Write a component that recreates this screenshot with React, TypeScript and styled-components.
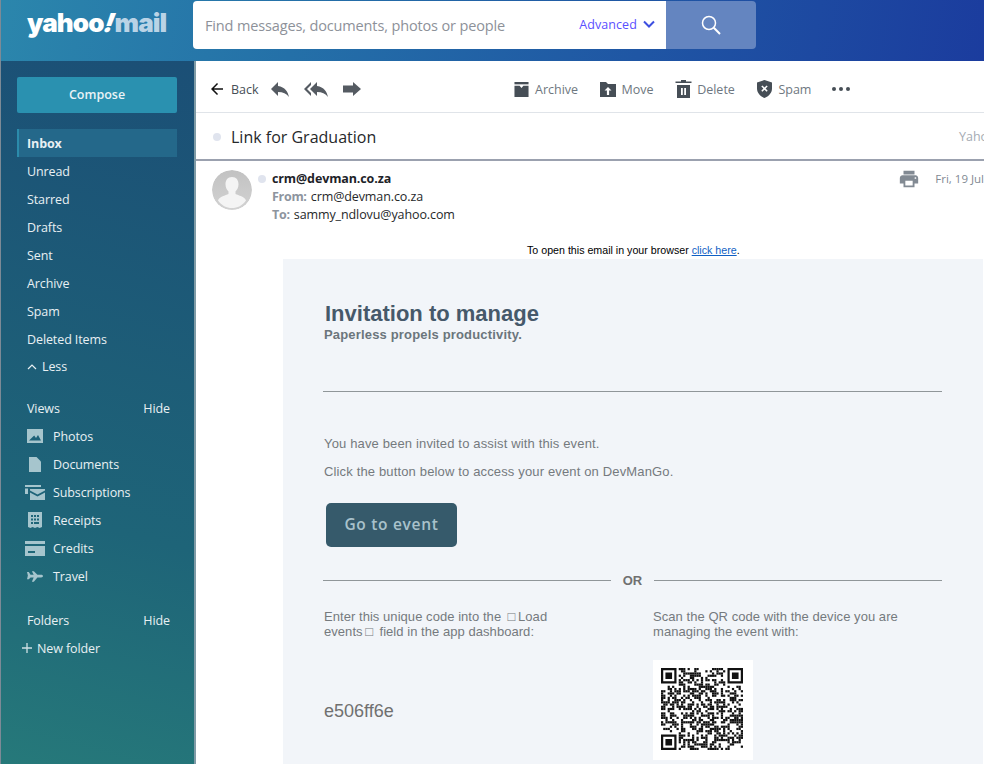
import React from "react";
import styled, { createGlobalStyle } from "styled-components";
import { MdArrowBack, MdPrint, MdReply, MdReplyAll } from "react-icons/md";

const GlobalStyle = createGlobalStyle`
  html, body {
    margin: 0;
    padding: 0;
    height: 100%;
    overflow: hidden;
    background: #fff;
  }
  * {
    box-sizing: border-box;
  }
`;

const uiFont = `"Open Sans", "Noto Sans", sans-serif`;
const mailFont = `"Liberation Sans", Arial, sans-serif`;

/**
 * page frame
 */
const Page = styled.div`
  width: 984px;
  height: 764px;
  overflow: hidden;
  display: flex;
  flex-direction: column;
  font-family: ${uiFont};
  border-left: 1px solid #7d8a96;
`;

const Header = styled.header`
  height: 61px;
  flex: none;
  display: flex;
  align-items: flex-start;
  background: linear-gradient(100deg, #2b86ac 0%, #2470a8 30%, #1f56a4 65%, #1b3c9e 100%);
`;

const LogoBox = styled.div`
  width: 192px;
  height: 50px;
  padding: 7px 0 0 26px;
  display: flex;
  align-items: baseline;
  font-family: Inter, Lato, "Liberation Sans", sans-serif;
  font-size: 26px;
  font-weight: 900;
  letter-spacing: -0.9px;
  color: #fff;
`;

const LogoBang = styled.span`
  display: inline-block;
  transform: skewX(-20deg);
  margin-left: 1px;
`;

const LogoMail = styled.span`
  color: #b9d3e6;
  margin-left: 1px;
`;

const SearchBox = styled.div`
  width: 473px;
  height: 48px;
  margin-top: 1px;
  padding: 0 11px 0 12px;
  display: flex;
  align-items: center;
  justify-content: space-between;
  background: #fff;
  border-radius: 4px 0 0 4px;
`;

const SearchHint = styled.span`
  font-size: 14.5px;
  letter-spacing: -0.14px;
  color: #8d9199;
`;

const Advanced = styled.span`
  display: flex;
  align-items: center;
  gap: 6px;
  padding-bottom: 2px;
  font-size: 12.5px;
  letter-spacing: 0.1px;
  color: #5a4fff;
`;

const SearchButton = styled.div`
  width: 90px;
  height: 48px;
  margin-top: 1px;
  display: flex;
  align-items: center;
  justify-content: center;
  background: #6485c0;
  border-radius: 0 4px 4px 0;
`;

const Body = styled.div`
  flex: 1;
  min-height: 0;
  display: flex;
`;

/**
 * left rail
 */
const Sidebar = styled.aside`
  width: 195px;
  flex: none;
  padding: 16px 17px 0 16px;
  background: linear-gradient(195deg, #1b4f76 0%, #1e6478 65%, #26797a 100%);
  border-right: 2px solid #7f9ba6;
  color: #e8f0f3;
`;

const Compose = styled.div`
  height: 36px;
  margin-bottom: 16px;
  padding-bottom: 2px;
  display: flex;
  align-items: center;
  justify-content: center;
  background: #2a91b0;
  border-radius: 2px;
  font-size: 12.5px;
  font-weight: 600;
  color: #e8f3f6;
`;

const NavRow = styled.div<{ $active?: boolean }>`
  height: 28px;
  display: flex;
  align-items: center;
  padding-left: ${(p) => (p.$active ? "8px" : "10px")};
  border-left: ${(p) => (p.$active ? "2px solid #2b8bab" : "0")};
  background: ${(p) => (p.$active ? "#24688a" : "transparent")};
  font-size: 12.5px;
  font-weight: ${(p) => (p.$active ? 700 : 400)};
  letter-spacing: -0.1px;
  white-space: nowrap;
`;

const LessRow = styled(NavRow)`
  height: 27px;
  gap: 5px;
`;

const SectionRow = styled(NavRow)<{ $gap: number }>`
  margin-top: ${(p) => p.$gap}px;
  justify-content: space-between;
  padding-right: 7px;
`;

const ViewRow = styled(NavRow)`
  padding-left: 8px;
`;

const ViewIcon = styled.span`
  width: 20px;
  margin-right: 8px;
  display: flex;
  justify-content: center;
  color: #a6c5cd;
`;

const NewFolderRow = styled(NavRow)`
  padding-left: 5px;
  gap: 5px;
`;

/**
 * message pane
 */
const Pane = styled.main`
  flex: 1;
  min-width: 0;
  overflow: hidden;
  display: flex;
  flex-direction: column;
  background: #fff;
`;

const Toolbar = styled.div`
  height: 52px;
  flex: none;
  display: flex;
  align-items: center;
  padding: 5px 0 0 12px;
  border-bottom: 1px solid #e0e4e9;
`;

const BackLink = styled.span`
  display: flex;
  align-items: center;
  gap: 5px;
  width: 60px;
  font-size: 12.5px;
  color: #464e56;
`;

const ReplyIcons = styled.div`
  width: 245px;
  display: flex;
  align-items: center;
  gap: 12px;
  color: #555b62;
`;

const ForwardSlot = styled.span`
  display: flex;
  margin-left: 3px;
`;

const ToolAction = styled.span`
  display: flex;
  align-items: center;
  gap: 5px;
  margin-right: 21.5px;
  font-size: 12.5px;
  color: #6e7780;
`;

const MoreDots = styled.span`
  display: flex;
  gap: 2.5px;
  margin-left: -1px;
`;

const Dot = styled.i`
  width: 4.5px;
  height: 4.5px;
  border-radius: 50%;
  background: #464e56;
`;

const SubjectBar = styled.div`
  height: 48px;
  flex: none;
  display: flex;
  align-items: center;
  padding: 1px 0 0 17px;
  border-bottom: 2px solid #9ba1af;
`;

const UnreadDot = styled.span`
  width: 8px;
  height: 8px;
  flex: none;
  border-radius: 50%;
  background: #e0e4ee;
`;

const Subject = styled.h1`
  margin: 0 0 0 10px;
  width: 728px;
  flex: none;
  font-size: 16px;
  font-weight: 400;
  color: #26282a;
`;

const SourceTag = styled.span`
  font-size: 12.5px;
  color: #a5abb3;
  white-space: nowrap;
`;

const MessageHead = styled.div`
  height: 81px;
  flex: none;
  display: flex;
  padding: 9px 0 0 16px;
`;

const Avatar = styled.div`
  width: 40px;
  height: 40px;
  flex: none;
  border-radius: 50%;
  overflow: hidden;
`;

const SenderDot = styled(UnreadDot)`
  margin: 5px 0 0 6px;
`;

const Sender = styled.div`
  width: 628px;
  margin-left: 6px;
`;

const SenderName = styled.div`
  height: 18px;
  line-height: 18px;
  font-size: 12.5px;
  font-weight: 700;
  letter-spacing: -0.12px;
  color: #1d2228;
`;

const AddressLine = styled.div`
  height: 18px;
  line-height: 18px;
  font-size: 12.5px;
  letter-spacing: -0.1px;
  color: #26282a;
`;

const AddressLabel = styled.b`
  font-weight: 700;
  margin-right: 1px;
  color: #8d949e;
  letter-spacing: -0.3px;
`;

const PrintSlot = styled.div`
  width: 38px;
  margin-top: -2px;
  padding-left: 1px;
  color: #828a93;
`;

const DateText = styled.span`
  font-size: 11.5px;
  line-height: 18px;
  color: #828a93;
  white-space: nowrap;
`;

/**
 * email content
 */
const OpenBrowser = styled.div`
  height: 17px;
  padding-left: 331px;
  padding-top: 1px;
  font-family: ${mailFont};
  font-size: 10.67px;
  line-height: 15px;
  color: #000;
  white-space: nowrap;
`;

const BrowserLink = styled.a`
  color: #0f5fc4;
  text-decoration: underline;
`;

const MailSheet = styled.div`
  flex: 1;
  margin-left: 87px;
  padding: 0 0 0 41px;
  width: 700px;
  background: #f2f5f9;
  font-family: ${mailFont};
  color: #666;
`;

const Title = styled.h2`
  margin: 0 0 0 1px;
  padding-top: 42px;
  font-size: 22px;
  line-height: 25px;
  font-weight: 700;
  color: #46596a;
`;

const Tagline = styled.div`
  margin-top: 1px;
  font-size: 13px;
  line-height: 15px;
  font-weight: 700;
  letter-spacing: 0.17px;
  color: #6b757c;
`;

const Rule = styled.hr`
  flex: 1;
  margin: 0;
  border: 0;
  border-top: 1px solid #909699;
`;

const TitleRule = styled.div`
  display: flex;
  width: 619px;
  margin: 49px 0 44px -1px;
`;

const Para = styled.p`
  margin: 0 0 13px;
  font-size: 13px;
  line-height: 15px;
  letter-spacing: 0.15px;
  color: #757a7e;
`;

const EventButton = styled.div`
  width: 131px;
  height: 44px;
  margin: 24px 0 0 2px;
  padding-bottom: 3px;
  display: flex;
  align-items: center;
  justify-content: center;
  border-radius: 5px;
  background: #365a6b;
  font-family: ${uiFont};
  font-size: 15.5px;
  font-weight: 600;
  letter-spacing: 0.7px;
  color: #a9c2cb;
`;

const OrRow = styled.div`
  width: 619px;
  height: 16px;
  margin: 25px 0 0 -1px;
  display: flex;
  align-items: center;
  gap: 12px;
  font-size: 13px;
  font-weight: 700;
  color: #707070;
`;

const Columns = styled.div`
  margin-top: 21px;
  display: grid;
  grid-template-columns: 329px 300px;
`;

const ColumnText = styled.div`
  width: 260px;
  font-size: 13px;
  line-height: 15px;
  letter-spacing: 0.05px;
  color: #757a7e;
`;

const CodeText = styled.div`
  margin-top: 61px;
  font-size: 18px;
  line-height: 22px;
  color: #707070;
`;

const QrFrame = styled.div`
  width: 100px;
  height: 100px;
  margin-top: 21px;
  padding: 8px;
  background: #fff;
`;

/* ---------- drawings ---------- */

const ArchiveIcon = () => (
  <svg width="17" height="15" viewBox="0 0 17 16" fill="#464e56">
    <path d="M1 0h15v2.500H1z" />
    <path d="M1 4h5.500l2 2.500 2-2.500H16v12H1z" />
  </svg>
);

const MoveIcon = () => (
  <svg width="17" height="16" viewBox="0 0 17 16" fill="#464e56">
    <path d="M0 1h6l2 2h8v13H0zM8 6 4.500 9.600h2.400V14h2.200V9.600h2.400z" fillRule="evenodd" />
  </svg>
);

const TrashIcon = () => (
  <svg width="17" height="18" viewBox="0 0 17 18" fill="#464e56">
    <path d="M6 0h5v1.400h5.500V3H.5V1.400H6z" />
    <path d="M2 5h13v13H2zM6 8v7h1.800V8zm3.200 0v7H11V8z" fillRule="evenodd" />
  </svg>
);

const SpamIcon = () => (
  <svg width="17" height="18" viewBox="0 0 16 18" fill="#464e56">
    <path
      d="M8 0l7.500 2.500v6c0 4.500-3.300 7.800-7.500 9.500C3.800 16.300.5 13 .5 8.500v-6zM5.900 5.400 4.800 6.500 6.900 8.600 4.800 10.700l1.100 1.100L8 9.700l2.100 2.100 1.100-1.100-2.100-2.100 2.100-2.100-1.100-1.100L8 7.500z"
      fillRule="evenodd"
    />
  </svg>
);

const ForwardIcon = () => (
  <svg width="18" height="14" viewBox="0 0 18 14" fill="#555b62">
    <path d="M10 0l8 7-8 7v-3.500H0v-7h10z" />
  </svg>
);

const SearchGlyph = () => (
  <svg width="20" height="20" viewBox="0 0 20 20" fill="none" stroke="#fff" strokeWidth="1.500">
    <circle cx="8" cy="8" r="6.500" />
    <path d="M12.800 12.800 19 19" strokeWidth="2" />
  </svg>
);

const Chevron = () => (
  <svg width="12" height="8" viewBox="0 0 12 8" fill="none" stroke="#3d4fe0" strokeWidth="2">
    <path d="M1 1.500 6 6.500l5-5" />
  </svg>
);

const LessChevron = () => (
  <svg width="10" height="6" viewBox="0 0 10 6" fill="none" stroke="#e8f0f3" strokeWidth="1.200">
    <path d="M1 5 5 1l4 4" />
  </svg>
);

const PlusIcon = () => (
  <svg width="10" height="10" viewBox="0 0 10 10" fill="none" stroke="#cfe0e4" strokeWidth="1.300">
    <path d="M5 0v10M0 5h10" />
  </svg>
);

const PersonAvatar = () => (
  <svg width="40" height="40" viewBox="0 0 40 40">
    <defs>
      <linearGradient id="avatarBg" x1="0" y1="0" x2="0" y2="1">
        <stop offset="0" stopColor="#c2c2c2" />
        <stop offset="1" stopColor="#d2d2d2" />
      </linearGradient>
    </defs>
    <circle cx="20" cy="20" r="20" fill="url(#avatarBg)" />
    <path
      d="M20 7c4.400 0 6.500 3.200 6.500 7.200 0 3-1.300 5.600-3 7.300v2.500c3 1.600 9 2.300 10.500 6.500C30.500 35.500 25.500 38 20 38S9.500 35.500 6 30.500c1.500-4.200 7.500-4.900 10.500-6.500v-2.500c-1.700-1.700-3-4.300-3-7.300C13.500 10.200 15.600 7 20 7z"
      fill="#f4f4f4"
    />
  </svg>
);

const PhotosIcon = () => (
  <svg width="16" height="14" viewBox="0 0 16 14" fill="currentColor">
    <path d="M0 0h16v14H0zM2 11.500h12L11 6 9 9 7.200 6.500z" fillRule="evenodd" />
  </svg>
);

const DocumentsIcon = () => (
  <svg width="12" height="15" viewBox="0 0 12 15" fill="currentColor">
    <path d="M0 0h7.500L12 4.500V15H0z" />
  </svg>
);

const SubscriptionsIcon = () => (
  <svg width="20" height="15" viewBox="0 0 20 15" fill="currentColor">
    <path d="M0 0h16v2H0zM0 3.500h3v5.500H0z" />
    <path d="M5 4h15v1.500l-7.500 4L5 5.500zM5 7.500l7.500 4 7.500-4V15H5z" />
  </svg>
);

const ReceiptsIcon = () => (
  <svg width="14" height="16" viewBox="0 0 14 16" fill="currentColor">
    <path
      d="M0 0h14v15l-2.300 1-2.300-1-2.400 1-2.400-1L2.300 16 0 15zM3 3v2h2V3zm3 0v2h2V3zm3 0v2h2V3zM3 6.500v2h2v-2zm3 0v2h2v-2zm3 0v2h2v-2zM3 10v2h2v-2zm3 0v2h5v-2z"
      fillRule="evenodd"
    />
  </svg>
);

const CreditsIcon = () => (
  <svg width="20" height="15" viewBox="0 0 20 15" fill="currentColor">
    <path d="M0 0h20v3H0zM0 5h20v10H0zM3 10v2h7v-2z" fillRule="evenodd" />
  </svg>
);

const TravelIcon = () => (
  <svg width="16" height="11" viewBox="0 0 18 12" fill="currentColor">
    <path d="M0 1h2l2 3h3.500L5.500 0h2.200l4 4H16c1.200 0 2 .8 2 1.500S17.200 7 16 7h-4.300l-4 5H5.500l2-5H4L2 9H0l1-4z" />
  </svg>
);

/* QR is a blurred little picture in the shot, so the modules are generated */
const QR_SIZE = 37;

const inFinder = (x: number, y: number) =>
  (x < 8 && y < 8) || (x >= QR_SIZE - 8 && y < 8) || (x < 8 && y >= QR_SIZE - 8);

const qrModules = (): [number, number][] => {
  const cells: [number, number][] = [];
  let seed = 20190719;
  for (let y = 0; y < QR_SIZE; y++) {
    for (let x = 0; x < QR_SIZE; x++) {
      seed = (seed * 1103515245 + 12345) & 0x7fffffff;
      if (!inFinder(x, y) && (seed >> 16) % 100 < 50) cells.push([x, y]);
    }
  }
  return cells;
};

const Finder = ({ x, y }: { x: number; y: number }) => (
  <path
    d={`M${x} ${y}h7v7h-7zM${x + 1} ${y + 1}v5h5v-5zM${x + 2} ${y + 2}h3v3h-3z`}
    fillRule="evenodd"
  />
);

const QrCode = () => (
  <svg width="82" height="82" viewBox={`0 0 ${QR_SIZE} ${QR_SIZE}`} fill="#111">
    <Finder x={0} y={0} />
    <Finder x={QR_SIZE - 7} y={0} />
    <Finder x={0} y={QR_SIZE - 7} />
    {qrModules().map(([x, y]) => (
      <rect key={`${x}-${y}`} x={x} y={y} width="1" height="1" />
    ))}
  </svg>
);

/* ---------- data ---------- */

const folders = ["Unread", "Starred", "Drafts", "Sent", "Archive", "Spam", "Deleted Items"];

const views = [
  { label: "Photos", icon: <PhotosIcon /> },
  { label: "Documents", icon: <DocumentsIcon /> },
  { label: "Subscriptions", icon: <SubscriptionsIcon /> },
  { label: "Receipts", icon: <ReceiptsIcon /> },
  { label: "Credits", icon: <CreditsIcon /> },
  { label: "Travel", icon: <TravelIcon /> },
];

const actions = [
  { label: "Archive", icon: <ArchiveIcon /> },
  { label: "Move", icon: <MoveIcon /> },
  { label: "Delete", icon: <TrashIcon /> },
  { label: "Spam", icon: <SpamIcon /> },
];

const App: React.FC = () => {
  return (
    <Page>
      <GlobalStyle />
      <Header>
        <LogoBox>
          yahoo<LogoBang>!</LogoBang>
          <LogoMail>mail</LogoMail>
        </LogoBox>
        <SearchBox>
          <SearchHint>Find messages, documents, photos or people</SearchHint>
          <Advanced>
            Advanced <Chevron />
          </Advanced>
        </SearchBox>
        <SearchButton>
          <SearchGlyph />
        </SearchButton>
      </Header>
      <Body>
        <Sidebar>
          <Compose>Compose</Compose>
          <NavRow $active>Inbox</NavRow>
          {folders.map((name) => (
            <NavRow key={name}>{name}</NavRow>
          ))}
          <LessRow>
            <LessChevron /> Less
          </LessRow>
          <SectionRow $gap={14}>
            <span>Views</span>
            <span>Hide</span>
          </SectionRow>
          {views.map((view) => (
            <ViewRow key={view.label}>
              <ViewIcon>{view.icon}</ViewIcon>
              {view.label}
            </ViewRow>
          ))}
          <SectionRow $gap={16}>
            <span>Folders</span>
            <span>Hide</span>
          </SectionRow>
          <NewFolderRow>
            <PlusIcon /> New folder
          </NewFolderRow>
        </Sidebar>
        <Pane>
          <Toolbar>
            <BackLink>
              <MdArrowBack size={18} color="#111" />
              Back
            </BackLink>
            <ReplyIcons>
              <MdReply size={24} />
              <MdReplyAll size={24} />
              <ForwardSlot>
                <ForwardIcon />
              </ForwardSlot>
            </ReplyIcons>
            {actions.map((action) => (
              <ToolAction key={action.label}>
                {action.icon}
                {action.label}
              </ToolAction>
            ))}
            <MoreDots>
              <Dot />
              <Dot />
              <Dot />
            </MoreDots>
          </Toolbar>
          <SubjectBar>
            <UnreadDot />
            <Subject>Link for Graduation</Subject>
            <SourceTag>Yahoo</SourceTag>
          </SubjectBar>
          <MessageHead>
            <Avatar>
              <PersonAvatar />
            </Avatar>
            <SenderDot />
            <Sender>
              <SenderName>crm@devman.co.za</SenderName>
              <AddressLine>
                <AddressLabel>From:</AddressLabel> crm@devman.co.za
              </AddressLine>
              <AddressLine>
                <AddressLabel>To:</AddressLabel> sammy_ndlovu@yahoo.com
              </AddressLine>
            </Sender>
            <PrintSlot>
              <MdPrint size={22} />
            </PrintSlot>
            <DateText>Fri, 19 Jul</DateText>
          </MessageHead>
          <OpenBrowser>
            To open this email in your browser <BrowserLink>click here</BrowserLink>.
          </OpenBrowser>
          <MailSheet>
            <Title>Invitation to manage</Title>
            <Tagline>Paperless propels productivity.</Tagline>
            <TitleRule>
              <Rule />
            </TitleRule>
            <Para>You have been invited to assist with this event.</Para>
            <Para>Click the button below to access your event on DevManGo.</Para>
            <EventButton>Go to event</EventButton>
            <OrRow>
              <Rule />
              OR
              <Rule />
            </OrRow>
            <Columns>
              <div>
                <ColumnText>
                  {"Enter this unique code into the \u2009□\u2009Load events\u2009□\u2009 field in the app dashboard:"}
                </ColumnText>
                <CodeText>e506ff6e</CodeText>
              </div>
              <div>
                <ColumnText>Scan the QR code with the device you are managing the event with:</ColumnText>
                <QrFrame>
                  <QrCode />
                </QrFrame>
              </div>
            </Columns>
          </MailSheet>
        </Pane>
      </Body>
    </Page>
  );
};

export default App;
